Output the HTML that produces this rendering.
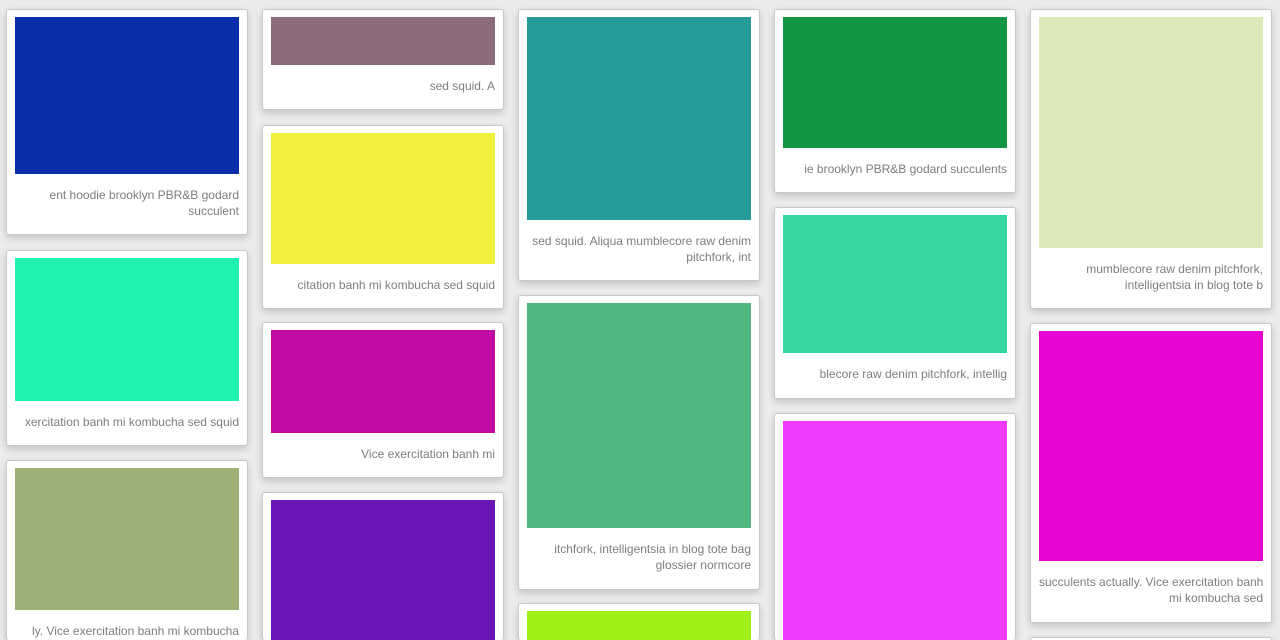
<!DOCTYPE html>
<html><head><style>
html,body{margin:0;padding:0;background:#ececec;width:1280px;height:640px;overflow:hidden;font-family:"Liberation Sans",sans-serif}
#w{position:relative;width:1280px;height:640px;overflow:hidden}
.c{position:absolute;width:242px;box-sizing:border-box;background:#fff;border:1px solid #c8c8c8;border-radius:3px;box-shadow:0 3px 8px rgba(0,0,0,.18);padding:7px 8px 0}
.i{width:224px}
.t{margin:13px 0 0;font-size:12px;line-height:16px;color:#7d7d7d;text-align:right;white-space:nowrap}
</style></head><body><div id="w">
<div class="c" style="left:6px;top:9px;height:226px"><div class="i" style="height:157px;background:#0a2daa"></div><p class="t">ent hoodie brooklyn PBR&amp;B godard<br>succulent</p></div>
<div class="c" style="left:6px;top:250px;height:196px"><div class="i" style="height:143px;background:#20f2b0"></div><p class="t">xercitation banh mi kombucha sed squid</p></div>
<div class="c" style="left:6px;top:460px;height:180px;border-bottom:none"><div class="i" style="height:142px;background:#9cb175"></div><p class="t">ly. Vice exercitation banh mi kombucha</p></div>

<div class="c" style="left:262px;top:9px;height:101px"><div class="i" style="height:48px;background:#8a6c7a"></div><p class="t">sed squid. A</p></div>
<div class="c" style="left:262px;top:125px;height:184px"><div class="i" style="height:131px;background:#eef03b"></div><p class="t">citation banh mi kombucha sed squid</p></div>
<div class="c" style="left:262px;top:322px;height:156px"><div class="i" style="height:103px;background:#c00aa2"></div><p class="t">Vice exercitation banh mi</p></div>
<div class="c" style="left:262px;top:492px;height:148px;border-bottom:none"><div class="i" style="height:140px;background:#6815b4"></div></div>

<div class="c" style="left:518px;top:9px;height:272px"><div class="i" style="height:203px;background:#259b9a"></div><p class="t">sed squid. Aliqua mumblecore raw denim<br>pitchfork, int</p></div>
<div class="c" style="left:518px;top:295px;height:295px"><div class="i" style="height:225px;background:#52b683"></div><p class="t">itchfork, intelligentsia in blog tote bag<br>glossier normcore</p></div>
<div class="c" style="left:518px;top:603px;height:37px;border-bottom:none"><div class="i" style="height:29px;background:#9ef016"></div></div>

<div class="c" style="left:774px;top:9px;height:184px"><div class="i" style="height:131px;background:#139643"></div><p class="t">ie brooklyn PBR&amp;B godard succulents</p></div>
<div class="c" style="left:774px;top:207px;height:192px"><div class="i" style="height:138px;background:#36d6a0"></div><p class="t">blecore raw denim pitchfork, intellig</p></div>
<div class="c" style="left:774px;top:413px;height:227px;border-bottom:none"><div class="i" style="height:219px;background:#f03af9"></div></div>

<div class="c" style="left:1030px;top:9px;height:300px"><div class="i" style="height:231px;background:#dce9bb"></div><p class="t">mumblecore raw denim pitchfork,<br>intelligentsia in blog tote b</p></div>
<div class="c" style="left:1030px;top:323px;height:300px"><div class="i" style="height:230px;background:#e705d0"></div><p class="t">succulents actually. Vice exercitation banh<br>mi kombucha sed</p></div>
<div class="c" style="left:1030px;top:637px;height:3px;border-bottom:none"></div>
</div></body></html>
